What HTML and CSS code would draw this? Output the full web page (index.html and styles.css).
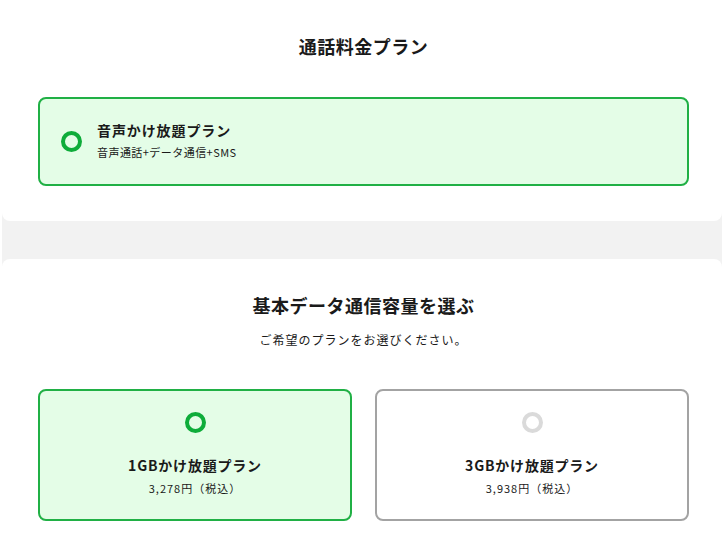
FILE: index.html
```html
<!DOCTYPE html>
<html lang="ja">
<head>
<meta charset="utf-8">
<link rel="stylesheet" href="styles.css">
</head>
<body>
<div class="page">
  <section class="card card-top">
    <h2 class="title">通話料金プラン</h2>
    <div class="option option-row selected">
      <span class="radio on"></span>
      <div class="option-text">
        <div class="option-name">音声かけ放題プラン</div>
        <div class="option-sub">音声通話+データ通信+SMS</div>
      </div>
    </div>
  </section>
  <section class="card card-bottom">
    <h2 class="title">基本データ通信容量を選ぶ</h2>
    <p class="lead">ご希望のプランをお選びください。</p>
    <div class="grid">
      <div class="option option-col selected">
        <span class="radio on"></span>
        <div class="plan-name">1GBかけ放題プラン</div>
        <div class="plan-price">3,278円（税込）</div>
      </div>
      <div class="option option-col">
        <span class="radio"></span>
        <div class="plan-name">3GBかけ放題プラン</div>
        <div class="plan-price">3,938円（税込）</div>
      </div>
    </div>
  </section>
</div>
</body>
</html>
```
FILE: styles.css
```css
* { box-sizing: border-box; }
html, body { margin: 0; padding: 0; background: #fff; }
body {
  font-family: "Noto Sans CJK JP", "Noto Sans", sans-serif;
  color: #1a1a1a;
}
.page {
  margin: 0 2px;
  background: #f2f2f2;
}
.card {
  background: #fff;
  padding: 33px 33px 35px 36px;
}
.card-top { border-radius: 0 0 8px 8px; }
.card-bottom {
  margin-top: 38px;
  border-radius: 8px 8px 0 0;
  padding-bottom: 12px;
}
.title {
  margin: 0;
  text-align: center;
  font-size: 18px;
  line-height: 27px;
  font-weight: 700;
  letter-spacing: 0.5px;
}
.option {
  border: 2px solid #20b045;
  border-radius: 8px;
  background: #fff;
}
.option.selected { background: #e4fde7; }
.option-row {
  margin-top: 37px;
  height: 89px;
  display: flex;
  align-items: center;
  padding-left: 21px;
  gap: 15px;
}
.option-text { margin-bottom: 3px; }
.radio {
  display: block;
  width: 21px;
  height: 21px;
  border-radius: 50%;
  border: 4px solid #dadada;
  flex: none;
}
.radio.on { border-color: #0eac3a; }
.option-name {
  font-size: 14px;
  line-height: 20px;
  font-weight: 700;
  letter-spacing: 0.9px;
}
.option-sub {
  margin-top: 4px;
  font-size: 11px;
  line-height: 16px;
  letter-spacing: 0.45px;
}
.lead {
  margin: 12px 0 0;
  text-align: center;
  font-size: 12px;
  line-height: 18px;
  letter-spacing: 1px;
}
.grid {
  margin-top: 40px;
  display: grid;
  grid-template-columns: 1fr 1fr;
  gap: 23px;
}
.option-col {
  display: flex;
  flex-direction: column;
  align-items: center;
  padding: 21px 0 23px;
}
.option-col:not(.selected) { border-color: #a3a3a3; }
.plan-name {
  margin-top: 22px;
  font-size: 14px;
  line-height: 20px;
  font-weight: 700;
  letter-spacing: 0.8px;
}
.plan-price {
  margin-top: 5px;
  font-size: 11px;
  line-height: 16px;
  letter-spacing: 1px;
}
```
